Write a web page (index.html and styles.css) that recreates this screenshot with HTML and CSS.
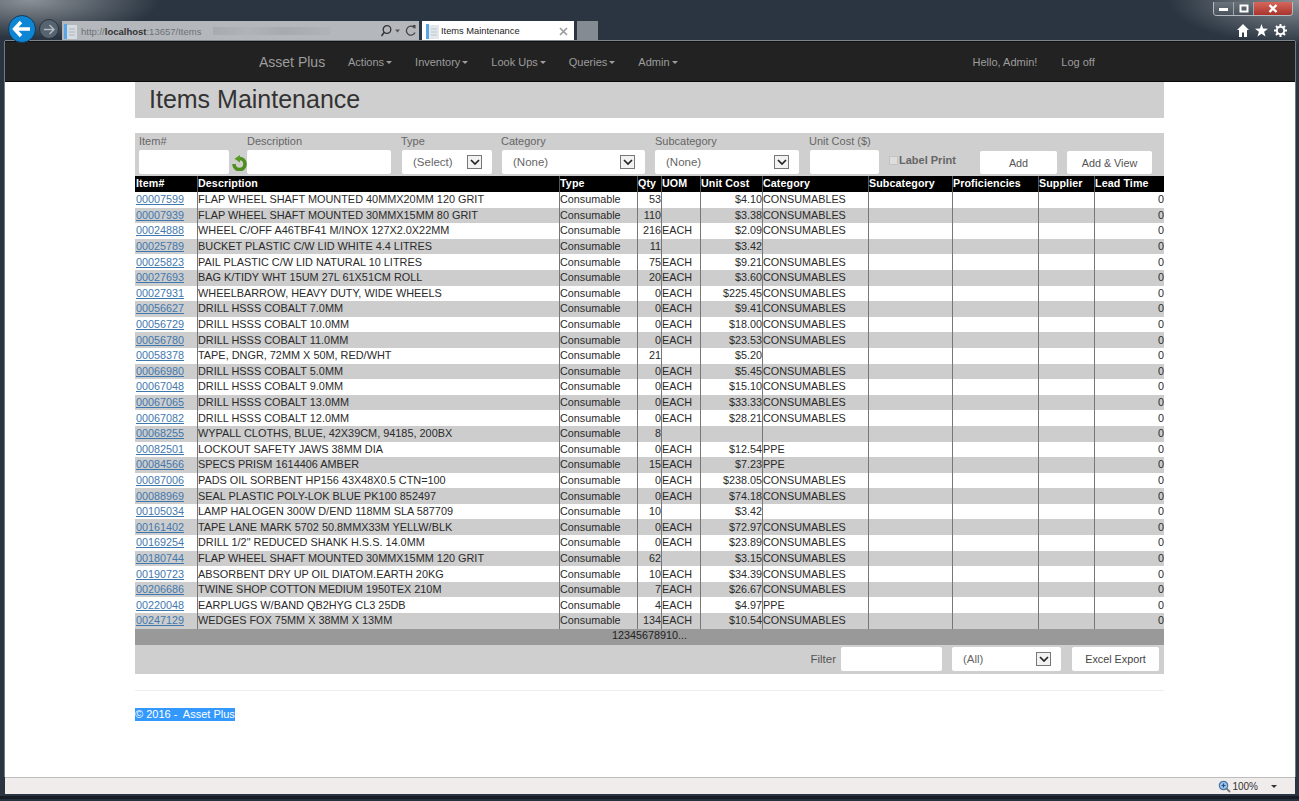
FILE: index.html
```html
<!DOCTYPE html>
<html lang="en">
  <head>
    <meta charset="UTF-8" />
    <title>Items Maintenance</title>
    <link rel="stylesheet" href="styles.css">
  </head>
  <body>
    <div class="window">
      <!-- browser frame -->
      <header class="titlebar">
        <div class="nav-buttons">
          <span class="back-btn">
            <svg width="20" height="18" viewBox="0 0 20 18"><path d="M9 2 L2.5 9 L9 16 M3 9 H18" fill="none" stroke="#fff" stroke-width="3.4"/></svg>
          </span>
          <span class="forward-btn">
            <svg width="12" height="11" viewBox="0 0 12 11"><path d="M6.5 1 L11 5.5 L6.5 10 M11 5.5 H1" fill="none" stroke="#b4bac0" stroke-width="1.5"/></svg>
          </span>
        </div>
        <div class="address-bar">
          <svg class="page-icon" width="13" height="15" viewBox="0 0 13 15"><rect width="3" height="15" fill="#5aa5e4"/><rect x="3" y="1" width="10" height="14" fill="#d5dbe1"/><path d="M5 5 H11 M5 8 H11 M5 11 H11" stroke="#aeb6be"/></svg>
          <span class="url">http://<b>localhost</b>:13657/Items</span>
          <span class="url-blur"></span>
          <svg class="addr-icons" width="38" height="14" viewBox="0 0 38 14">
            <circle cx="7" cy="5.5" r="3.8" fill="none" stroke="#333" stroke-width="1.3"/>
            <path d="M4.3 8.3 L1.5 12" stroke="#333" stroke-width="1.5"/>
            <path d="M15 5.5 H20 L17.5 8.5 Z" fill="#555"/>
            <path d="M34.5 4 A4.5 4.5 0 1 0 35 8.5" fill="none" stroke="#444" stroke-width="1.3"/>
            <path d="M32.5 1 L35.5 1 L35.5 5 Z" fill="#444"/>
          </svg>
        </div>
        <div class="tab">
          <svg class="page-icon" width="13" height="15" viewBox="0 0 13 15"><rect width="3" height="15" fill="#5aa5e4"/><rect x="3" y="1" width="10" height="14" fill="#e3e8ed"/><path d="M5 5 H11 M5 8 H11 M5 11 H11" stroke="#bcc4cc"/></svg>
          <span class="tab-title">Items Maintenance</span>
          <svg width="9" height="9" viewBox="0 0 9 9"><path d="M1 1 L8 8 M8 1 L1 8" stroke="#9a9a9a" stroke-width="1.6"/></svg>
        </div>
        <div class="new-tab"></div>
        <div class="window-side">
          <div class="window-controls">
            <span class="win-btn">
              <svg width="9" height="4" viewBox="0 0 9 4"><rect width="9" height="3" y="1" fill="#fff"/></svg>
            </span>
            <span class="win-btn">
              <svg width="10" height="9" viewBox="0 0 10 9"><rect x="1.5" y="1.5" width="7" height="6" fill="none" stroke="#fff" stroke-width="2"/></svg>
            </span>
            <span class="win-btn win-close">
              <svg width="10" height="9" viewBox="0 0 10 9"><path d="M1.5 1 L8.5 8 M8.5 1 L1.5 8" stroke="#fff" stroke-width="2.4"/></svg>
            </span>
          </div>
          <div class="tool-icons">
            <svg width="12" height="13" viewBox="0 0 12 13"><path d="M6 0 L12 6 H10 V13 H7 V8.5 H5 V13 H2 V6 H0 Z" fill="#fff"/></svg>
            <svg width="13" height="13" viewBox="0 0 13 13"><path d="M6.5 0 L8.1 4.6 L13 4.8 L9.1 7.7 L10.5 12.5 L6.5 9.7 L2.5 12.5 L3.9 7.7 L0 4.8 L4.9 4.6 Z" fill="#fff"/></svg>
            <svg width="13" height="13" viewBox="0 0 13 13"><circle cx="6.5" cy="6.5" r="3.7" fill="none" stroke="#fff" stroke-width="2"/><path d="M6.5 0 V2.5 M6.5 10.5 V13 M0 6.5 H2.5 M10.5 6.5 H13 M2 2 L3.7 3.7 M9.3 9.3 L11 11 M11 2 L9.3 3.7 M3.7 9.3 L2 11" stroke="#fff" stroke-width="2"/></svg>
          </div>
        </div>
      </header>

      <nav class="navbar">
        <a class="brand" href="#">Asset Plus</a>
        <ul class="nav-links">
          <li>Actions<span class="caret"></span></li>
          <li>Inventory<span class="caret"></span></li>
          <li>Look Ups<span class="caret"></span></li>
          <li>Queries<span class="caret"></span></li>
          <li>Admin<span class="caret"></span></li>
        </ul>
        <ul class="nav-right">
          <li>Hello, Admin!</li>
          <li>Log off</li>
        </ul>
      </nav>

      <main class="page">
        <div class="container">
          <h1>Items Maintenance</h1>

          <form class="add-form">
            <div class="field field-item">
              <label for="itemNo">Item#</label>
              <div class="item-input">
                <input type="text" id="itemNo" />
                <svg class="refresh" width="17" height="16" viewBox="0 0 17 16">
                  <path d="M8.5 3.5 A5.5 5.5 0 1 1 3 9" fill="none" stroke="#4f8f1d" stroke-width="3.6"/>
                  <path d="M9 0 L9 7.5 L3.5 3.7 Z" fill="#5a9a22"/>
                </svg>
              </div>
            </div>
            <div class="field field-desc">
              <label for="desc">Description</label>
              <input type="text" id="desc" />
            </div>
            <div class="field field-type">
              <label>Type</label>
              <div class="select-box"><span>(Select)</span><span class="select-arrow"><svg width="10" height="6" viewBox="0 0 10 6"><path d="M1 1 L5 5 L9 1" fill="none" stroke="#222" stroke-width="1.7"/></svg></span></div>
            </div>
            <div class="field field-cat">
              <label>Category</label>
              <div class="select-box"><span>(None)</span><span class="select-arrow"><svg width="10" height="6" viewBox="0 0 10 6"><path d="M1 1 L5 5 L9 1" fill="none" stroke="#222" stroke-width="1.7"/></svg></span></div>
            </div>
            <div class="field field-sub">
              <label>Subcategory</label>
              <div class="select-box"><span>(None)</span><span class="select-arrow"><svg width="10" height="6" viewBox="0 0 10 6"><path d="M1 1 L5 5 L9 1" fill="none" stroke="#222" stroke-width="1.7"/></svg></span></div>
            </div>
            <div class="field field-cost">
              <label for="cost">Unit Cost ($)</label>
              <input type="text" id="cost" />
            </div>
            <label class="label-print"><span class="check"></span>Label Print</label>
            <button type="button" class="btn btn-add">Add</button>
            <button type="button" class="btn btn-view">Add &amp; View</button>
          </form>

          <table class="items">
            <colgroup>
              <col class="c-item" /><col class="c-desc" /><col class="c-type" /><col class="c-qty" /><col class="c-uom" /><col class="c-cost" /><col class="c-cat" /><col class="c-sub" /><col class="c-prof" /><col class="c-supp" /><col class="c-lead" />
            </colgroup>
            <thead>
              <tr><th>Item#</th><th>Description</th><th>Type</th><th>Qty</th><th>UOM</th><th>Unit Cost</th><th>Category</th><th>Subcategory</th><th>Proficiencies</th><th>Supplier</th><th>Lead Time</th></tr>
            </thead>
            <tbody>
              <tr><td><a href="#">00007599</a></td><td>FLAP WHEEL SHAFT MOUNTED 40MMX20MM 120 GRIT</td><td>Consumable</td><td class="num">53</td><td></td><td class="num">$4.10</td><td>CONSUMABLES</td><td></td><td></td><td></td><td class="num">0</td></tr>
              <tr><td><a href="#">00007939</a></td><td>FLAP WHEEL SHAFT MOUNTED 30MMX15MM 80 GRIT</td><td>Consumable</td><td class="num">110</td><td></td><td class="num">$3.38</td><td>CONSUMABLES</td><td></td><td></td><td></td><td class="num">0</td></tr>
              <tr><td><a href="#">00024888</a></td><td>WHEEL C/OFF A46TBF41 M/INOX 127X2.0X22MM</td><td>Consumable</td><td class="num">216</td><td>EACH</td><td class="num">$2.09</td><td>CONSUMABLES</td><td></td><td></td><td></td><td class="num">0</td></tr>
              <tr><td><a href="#">00025789</a></td><td>BUCKET PLASTIC C/W LID WHITE 4.4 LITRES</td><td>Consumable</td><td class="num">11</td><td></td><td class="num">$3.42</td><td></td><td></td><td></td><td></td><td class="num">0</td></tr>
              <tr><td><a href="#">00025823</a></td><td>PAIL PLASTIC C/W LID NATURAL 10 LITRES</td><td>Consumable</td><td class="num">75</td><td>EACH</td><td class="num">$9.21</td><td>CONSUMABLES</td><td></td><td></td><td></td><td class="num">0</td></tr>
              <tr><td><a href="#">00027693</a></td><td>BAG K/TIDY WHT 15UM 27L 61X51CM ROLL</td><td>Consumable</td><td class="num">20</td><td>EACH</td><td class="num">$3.60</td><td>CONSUMABLES</td><td></td><td></td><td></td><td class="num">0</td></tr>
              <tr><td><a href="#">00027931</a></td><td>WHEELBARROW, HEAVY DUTY, WIDE WHEELS</td><td>Consumable</td><td class="num">0</td><td>EACH</td><td class="num">$225.45</td><td>CONSUMABLES</td><td></td><td></td><td></td><td class="num">0</td></tr>
              <tr><td><a href="#">00056627</a></td><td>DRILL HSSS COBALT 7.0MM</td><td>Consumable</td><td class="num">0</td><td>EACH</td><td class="num">$9.41</td><td>CONSUMABLES</td><td></td><td></td><td></td><td class="num">0</td></tr>
              <tr><td><a href="#">00056729</a></td><td>DRILL HSSS COBALT 10.0MM</td><td>Consumable</td><td class="num">0</td><td>EACH</td><td class="num">$18.00</td><td>CONSUMABLES</td><td></td><td></td><td></td><td class="num">0</td></tr>
              <tr><td><a href="#">00056780</a></td><td>DRILL HSSS COBALT 11.0MM</td><td>Consumable</td><td class="num">0</td><td>EACH</td><td class="num">$23.53</td><td>CONSUMABLES</td><td></td><td></td><td></td><td class="num">0</td></tr>
              <tr><td><a href="#">00058378</a></td><td>TAPE, DNGR, 72MM X 50M, RED/WHT</td><td>Consumable</td><td class="num">21</td><td></td><td class="num">$5.20</td><td></td><td></td><td></td><td></td><td class="num">0</td></tr>
              <tr><td><a href="#">00066980</a></td><td>DRILL HSSS COBALT 5.0MM</td><td>Consumable</td><td class="num">0</td><td>EACH</td><td class="num">$5.45</td><td>CONSUMABLES</td><td></td><td></td><td></td><td class="num">0</td></tr>
              <tr><td><a href="#">00067048</a></td><td>DRILL HSSS COBALT 9.0MM</td><td>Consumable</td><td class="num">0</td><td>EACH</td><td class="num">$15.10</td><td>CONSUMABLES</td><td></td><td></td><td></td><td class="num">0</td></tr>
              <tr><td><a href="#">00067065</a></td><td>DRILL HSSS COBALT 13.0MM</td><td>Consumable</td><td class="num">0</td><td>EACH</td><td class="num">$33.33</td><td>CONSUMABLES</td><td></td><td></td><td></td><td class="num">0</td></tr>
              <tr><td><a href="#">00067082</a></td><td>DRILL HSSS COBALT 12.0MM</td><td>Consumable</td><td class="num">0</td><td>EACH</td><td class="num">$28.21</td><td>CONSUMABLES</td><td></td><td></td><td></td><td class="num">0</td></tr>
              <tr><td><a href="#">00068255</a></td><td>WYPALL CLOTHS, BLUE, 42X39CM, 94185, 200BX</td><td>Consumable</td><td class="num">8</td><td></td><td class="num"></td><td></td><td></td><td></td><td></td><td class="num">0</td></tr>
              <tr><td><a href="#">00082501</a></td><td>LOCKOUT SAFETY JAWS 38MM DIA</td><td>Consumable</td><td class="num">0</td><td>EACH</td><td class="num">$12.54</td><td>PPE</td><td></td><td></td><td></td><td class="num">0</td></tr>
              <tr><td><a href="#">00084566</a></td><td>SPECS PRISM 1614406 AMBER</td><td>Consumable</td><td class="num">15</td><td>EACH</td><td class="num">$7.23</td><td>PPE</td><td></td><td></td><td></td><td class="num">0</td></tr>
              <tr><td><a href="#">00087006</a></td><td>PADS OIL SORBENT HP156 43X48X0.5 CTN=100</td><td>Consumable</td><td class="num">0</td><td>EACH</td><td class="num">$238.05</td><td>CONSUMABLES</td><td></td><td></td><td></td><td class="num">0</td></tr>
              <tr><td><a href="#">00088969</a></td><td>SEAL PLASTIC POLY-LOK BLUE PK100 852497</td><td>Consumable</td><td class="num">0</td><td>EACH</td><td class="num">$74.18</td><td>CONSUMABLES</td><td></td><td></td><td></td><td class="num">0</td></tr>
              <tr><td><a href="#">00105034</a></td><td>LAMP HALOGEN 300W D/END 118MM SLA 587709</td><td>Consumable</td><td class="num">10</td><td></td><td class="num">$3.42</td><td></td><td></td><td></td><td></td><td class="num">0</td></tr>
              <tr><td><a href="#">00161402</a></td><td>TAPE LANE MARK 5702 50.8MMX33M YELLW/BLK</td><td>Consumable</td><td class="num">0</td><td>EACH</td><td class="num">$72.97</td><td>CONSUMABLES</td><td></td><td></td><td></td><td class="num">0</td></tr>
              <tr><td><a href="#">00169254</a></td><td>DRILL 1/2" REDUCED SHANK H.S.S. 14.0MM</td><td>Consumable</td><td class="num">0</td><td>EACH</td><td class="num">$23.89</td><td>CONSUMABLES</td><td></td><td></td><td></td><td class="num">0</td></tr>
              <tr><td><a href="#">00180744</a></td><td>FLAP WHEEL SHAFT MOUNTED 30MMX15MM 120 GRIT</td><td>Consumable</td><td class="num">62</td><td></td><td class="num">$3.15</td><td>CONSUMABLES</td><td></td><td></td><td></td><td class="num">0</td></tr>
              <tr><td><a href="#">00190723</a></td><td>ABSORBENT DRY UP OIL DIATOM.EARTH 20KG</td><td>Consumable</td><td class="num">10</td><td>EACH</td><td class="num">$34.39</td><td>CONSUMABLES</td><td></td><td></td><td></td><td class="num">0</td></tr>
              <tr><td><a href="#">00206686</a></td><td>TWINE SHOP COTTON MEDIUM 1950TEX 210M</td><td>Consumable</td><td class="num">7</td><td>EACH</td><td class="num">$26.67</td><td>CONSUMABLES</td><td></td><td></td><td></td><td class="num">0</td></tr>
              <tr><td><a href="#">00220048</a></td><td>EARPLUGS W/BAND QB2HYG CL3 25DB</td><td>Consumable</td><td class="num">4</td><td>EACH</td><td class="num">$4.97</td><td>PPE</td><td></td><td></td><td></td><td class="num">0</td></tr>
              <tr><td><a href="#">00247129</a></td><td>WEDGES FOX 75MM X 38MM X 13MM</td><td>Consumable</td><td class="num">134</td><td>EACH</td><td class="num">$10.54</td><td>CONSUMABLES</td><td></td><td></td><td></td><td class="num">0</td></tr>
            </tbody>
            <tfoot>
              <tr><td colspan="11">12345678910...</td></tr>
            </tfoot>
          </table>

          <div class="table-tools">
            <label for="filter">Filter</label>
            <input type="text" id="filter" />
            <div class="select-box select-all"><span>(All)</span><span class="select-arrow"><svg width="10" height="6" viewBox="0 0 10 6"><path d="M1 1 L5 5 L9 1" fill="none" stroke="#222" stroke-width="1.7"/></svg></span></div>
            <button type="button" class="btn btn-export">Excel Export</button>
          </div>

          <hr />
          <footer><p><span class="selected">&copy; 2016 -&nbsp; Asset Plus</span></p></footer>
        </div>
      </main>

      <div class="statusbar">
        <svg width="13" height="13" viewBox="0 0 13 13"><circle cx="5.5" cy="5.5" r="4.2" fill="#9fc3e8" stroke="#4b76a8" stroke-width="1.2"/><path d="M3.5 5.5 H7.5 M5.5 3.5 V7.5" stroke="#1f4f8a" stroke-width="1.2"/><path d="M8.5 8.5 L12 12" stroke="#777" stroke-width="1.8"/></svg>
        <span class="zoom-level">100%</span>
        <span class="zoom-caret"></span>
      </div>
    </div>
  </body>
</html>
```

FILE: styles.css
```css
* {
  margin: 0;
  padding: 0;
  box-sizing: border-box;
}

body {
  font-family: "Liberation Sans", Arial, sans-serif;
  font-size: 12px;
  color: #333;
  background: #1d2631;
  height: 801px;
  overflow: hidden;
}

ul {
  list-style: none;
}

.window {
  height: 801px;
  display: flex;
  flex-direction: column;
  padding: 0 4px 7px 5px;
  background:
    radial-gradient(ellipse 130px 38px at 30px 0, #8b9197 0%, rgba(139, 145, 151, 0) 100%),
    radial-gradient(ellipse 130px 45px at 1299px 0, #8b9197 0%, rgba(139, 145, 151, 0) 100%),
    #2a3541;
  box-shadow: inset 0 -2px 0 #27313c, inset 0 -5px 0 #151c25;
}

/* browser frame */
.titlebar {
  height: 41px;
  flex-shrink: 0;
  display: flex;
  align-items: flex-end;
  position: relative;
}

.nav-buttons {
  display: flex;
  align-items: center;
  width: 57px;
  height: 28px;
  margin-bottom: -2px;
  padding-left: 3px;
  gap: 3px;
  position: relative;
  z-index: 2;
}

.back-btn {
  width: 28px;
  height: 28px;
  border-radius: 50%;
  background: #0e86d4;
  border: 1px solid #123a5c;
  display: flex;
  align-items: center;
  justify-content: center;
  flex-shrink: 0;
}

.forward-btn {
  width: 20px;
  height: 20px;
  border-radius: 50%;
  background: #566370;
  border: 1px solid #2a333d;
  display: flex;
  align-items: center;
  justify-content: center;
  flex-shrink: 0;
}

.address-bar {
  width: 357px;
  height: 20px;
  background: #b4b8bc;
  display: flex;
  align-items: center;
  padding-left: 2px;
  position: relative;
}

.url {
  margin-left: 4px;
  font-size: 9.5px;
  color: #6c7176;
}

.url b {
  color: #333;
}

.url-blur {
  width: 118px;
  height: 8px;
  margin-left: 12px;
  background: linear-gradient(90deg, #a6abb0, #b0b4b8 30%, #a6abb0 60%, #b0b4b8);
}

.addr-icons {
  margin-left: auto;
  margin-right: 1px;
}

.tab {
  width: 152px;
  height: 20px;
  margin-left: 3px;
  background: #fff;
  display: flex;
  align-items: center;
  padding: 0 6px 0 4px;
}

.tab-title {
  font-size: 9.3px;
  color: #222;
  margin-left: 2px;
  flex: 1;
}

.new-tab {
  width: 21px;
  height: 20px;
  margin-left: 3px;
  background: #858b93;
}

.window-side {
  margin-left: auto;
  align-self: flex-start;
  display: flex;
  flex-direction: column;
  align-items: flex-end;
}

.window-controls {
  display: flex;
  width: 80px;
  height: 14px;
  margin-top: 2px;
  margin-right: 2px;
  border: 1px solid #b4bac0;
  border-top: none;
  border-radius: 0 0 4px 4px;
  overflow: hidden;
}

.win-btn {
  width: 20px;
  background: linear-gradient(#6a727a, #4a535d);
  border-right: 1px solid #a0a7ad;
  display: flex;
  align-items: center;
  justify-content: center;
}

.win-close {
  flex: 1;
  border-right: none;
  background: linear-gradient(#d6675c, #a8342b);
}

.tool-icons {
  display: flex;
  gap: 6px;
  margin-top: 8px;
  margin-right: 8px;
  align-items: center;
}

/* navbar */
.navbar {
  height: 41px;
  flex-shrink: 0;
  background: #222;
  border-top: 1px solid #111;
  border-bottom: 1px solid #080808;
  box-shadow: 0 -1px 0 #7e878f, -1px 0 0 #6f7b86, 1px 0 0 #6f7b86;
  display: flex;
  align-items: center;
  padding-left: 254px;
  color: #9d9d9d;
  position: relative;
}

.brand {
  color: #9d9d9d;
  font-size: 14px;
  text-decoration: none;
  width: 89px;
}

.nav-links {
  display: flex;
  gap: 23px;
  font-size: 11px;
}

.caret {
  display: inline-block;
  margin-left: 2px;
  border-top: 3px solid #9d9d9d;
  border-left: 3px solid transparent;
  border-right: 3px solid transparent;
  vertical-align: middle;
}

.nav-right {
  display: flex;
  gap: 24px;
  margin-left: 295px;
  font-size: 11px;
}

/* page */
.page {
  flex: 1;
  background: #fff;
  padding-left: 130px;
  box-shadow: -1px 0 0 #6f7b86, 1px 0 0 #6f7b86;
}

.container {
  width: 1029px;
}

h1 {
  height: 36px;
  background: #cfcfcf;
  padding-left: 14px;
  font-size: 25px;
  font-weight: normal;
  line-height: 34px;
  color: #333;
}

.add-form {
  margin-top: 15px;
  height: 43px;
  background: #cfcfcf;
  display: flex;
  align-items: flex-start;
  position: relative;
}

.field {
  display: flex;
  flex-direction: column;
}

.field label {
  height: 17px;
  line-height: 17px;
  color: #666;
  font-size: 11px;
}

input[type="text"] {
  border: none;
  background: #fff;
  height: 24px;
  border-radius: 2px;
  outline: none;
}

.field-item {
  width: 112px;
  padding-left: 4px;
}

.item-input {
  display: flex;
  align-items: center;
  gap: 2px;
}

.item-input input {
  width: 90px;
  flex-shrink: 0;
}

.refresh {
  flex-shrink: 0;
  margin-top: 2px;
}

.field-desc {
  width: 154px;
}

.field-desc input {
  width: 144px;
}

.field-type {
  width: 100px;
}

.field-type .select-box {
  width: 90px;
  margin-left: 1px;
}

.field-cat {
  width: 154px;
}

.field-cat .select-box {
  width: 143px;
  margin-left: 1px;
}

.field-sub {
  width: 154px;
}

.field-sub .select-box {
  width: 144px;
}

.field-cost {
  width: 78px;
}

.field-cost input {
  width: 69px;
  margin-left: 1px;
}

.select-box {
  height: 24px;
  background: #fff;
  border-radius: 2px;
  display: flex;
  align-items: center;
  justify-content: space-between;
  padding: 0 10px 0 11px;
  color: #666;
  font-size: 11.5px;
}

.select-arrow {
  width: 15px;
  height: 14px;
  border: 1px solid #777;
  background: #f2f2f2;
  display: flex;
  align-items: center;
  justify-content: center;
}

.label-print {
  width: 93px;
  padding-left: 2px;
  margin-top: 21px;
  font-size: 11px;
  font-weight: bold;
  color: #666;
  display: flex;
  align-items: center;
  height: 12px;
}

.check {
  width: 9px;
  height: 9px;
  margin-right: 1px;
  background: #ddd;
  border: 1px solid #c4c4c4;
}

.btn {
  border: none;
  background: #fff;
  color: #555;
  font-family: inherit;
  font-size: 10.8px;
  height: 23px;
  border-radius: 2px;
  cursor: pointer;
}

.btn-add {
  width: 77px;
  margin-top: 18px;
}

.btn-view {
  width: 85px;
  margin-left: 10px;
  margin-top: 18px;
}

/* items grid */
.items {
  width: 1029px;
  table-layout: fixed;
  border-collapse: separate;
  border-spacing: 0;
  font-size: 10.8px;
}

.c-item { width: 63px; }
.c-desc { width: 362px; }
.c-type { width: 78px; }
.c-qty { width: 24px; }
.c-uom { width: 39px; }
.c-cost { width: 62px; }
.c-cat { width: 106px; }
.c-sub { width: 84px; }
.c-prof { width: 86px; }
.c-supp { width: 56px; }
.c-lead { width: 69px; }

.items th {
  background: #000;
  color: #fff;
  font-size: 10.7px;
  font-weight: bold;
  text-align: left;
  height: 16px;
  line-height: 13px;
  padding: 0 1px 2px 0;
  letter-spacing: 0.1px;
  white-space: nowrap;
  overflow: hidden;
  border-right: 1px solid #555;
}

.items th:first-child {
  padding-left: 1px;
}

.items th:last-child,
.items td:last-child {
  border-right: none;
}

.items tbody td {
  height: 15.6px;
  line-height: 14px;
  padding: 0 0 1px;
  border-right: 1px solid #777;
  color: #2a2a2a;
  white-space: nowrap;
  overflow: hidden;
}

.items tbody td:first-child {
  padding-left: 1px;
}

.items tbody td:nth-child(2) {
  font-size: 10.9px;
}

.items tbody tr:nth-child(even) td {
  background: #cdcdcd;
}

.items a {
  color: #3f78ad;
}

.items .num {
  text-align: right;
}

.items tfoot td {
  height: 16px;
  line-height: 13px;
  padding-bottom: 3px;
  background: #999;
  text-align: center;
  color: #222;
}

.table-tools {
  height: 29px;
  background: #cfcfcf;
  display: flex;
  align-items: center;
  justify-content: flex-end;
  padding-right: 5px;
}

.table-tools label {
  color: #555;
  margin-right: 5px;
  font-size: 11.5px;
}

.table-tools input {
  width: 101px;
}

.select-all {
  width: 109px;
  margin-left: 10px;
}

.btn-export {
  width: 87px;
  height: 24px;
  margin-left: 11px;
  color: #444;
}

hr {
  border: none;
  border-top: 1px solid #eee;
  margin-top: 16px;
}

footer {
  margin-top: 16px;
}

.selected {
  background: #3399ff;
  color: #fff;
  font-size: 11px;
  line-height: 13px;
  display: inline-block;
}

/* status bar */
.statusbar {
  height: 17px;
  flex-shrink: 0;
  background: #f0ecec;
  border-top: 1px solid #bdbdbd;
  display: flex;
  align-items: center;
  justify-content: flex-end;
  font-size: 10px;
  color: #333;
  padding-right: 18px;
}

.zoom-level {
  margin-left: 1px;
}

.zoom-caret {
  margin-left: 13px;
  border-top: 3px solid #333;
  border-left: 3px solid transparent;
  border-right: 3px solid transparent;
}
```
